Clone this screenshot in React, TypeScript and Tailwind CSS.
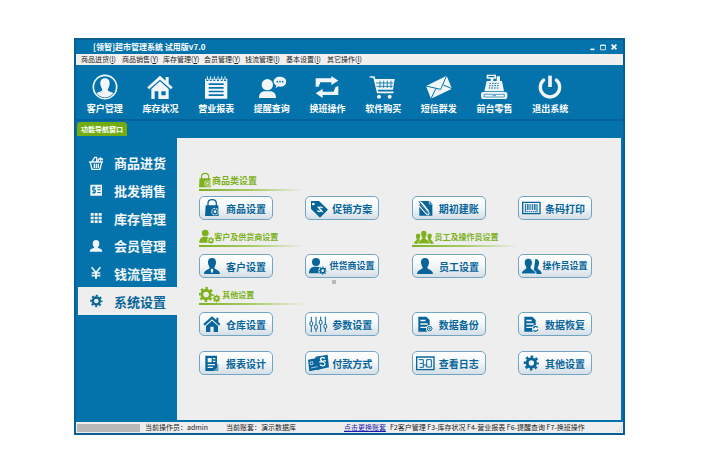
import type { ReactNode } from "react";

type GearProps = { cx: number; cy: number; r: number; ring: number; color?: string };

function Gear({ cx, cy, r, ring, color = "currentColor" }: GearProps) {
  return (
    <g fill="none" stroke={color}>
      <circle cx={cx} cy={cy} r={r - ring / 2} strokeWidth={ring} />
      <circle cx={cx} cy={cy} r={r + ring / 4} strokeWidth={ring * 0.8} pathLength={16} strokeDasharray="1 1" strokeDashoffset={0.5} />
    </g>
  );
}

/* ---------- toolbar icons ---------- */

const BLUE = "#0573ab";
const toolbar: { label: string; icon: ReactNode }[] = [
  {
    label: "客户管理",
    icon: (
      <>
        <circle cx="42" cy="39" r="35" fill="none" stroke="#f2f6f8" strokeWidth="5" />
        <path d="M42 13c10 0 15 7 14 17-1 9-5 12-6 18 1 5 12 5 17 10-6 8-15 12-25 12s-19-4-25-12c5-5 16-5 17-10-1-6-5-9-6-18-1-10 4-17 14-17z" />
      </>
    ),
  },
  {
    label: "库存状况",
    icon: (
      <>
        <path d="M42 5 59 20V9h9v20l12 11-5 6-33-29L9 46l-5-6z" />
        <path fillRule="evenodd" d="M42 22 68 45v30H16V45zM26 52v23h11V52zM46 52v12h13V52z" />
      </>
    ),
  },
  {
    label: "营业报表",
    icon: (
      <>
        <path fillRule="evenodd" d="M9 14h67v60H9zM20 28v5h45v-5zM20 39v5h45v-5zM20 50v5h45v-5zM20 61v5h45v-5z" />
        <path d="M16 8v13M26 8v13M37 8v13M48 8v13M59 8v13M69 8v13" stroke={BLUE} strokeWidth="6" fill="none" />
        <path d="M16 7v11M26 7v11M37 7v11M48 7v11M59 7v11M69 7v11" stroke="#f2f6f8" strokeWidth="3" fill="none" />
      </>
    ),
  },
  {
    label: "提醒查询",
    icon: (
      <>
        <circle cx="28" cy="32" r="17" />
        <path d="M3 72c0-14 8-20 17-20h17c9 0 17 6 17 20z" />
        <path d="M66 8c11 0 19 6 19 15s-8 15-19 15c-2 0-4 0-5-1l-8 6 2-9c-5-3-8-6-8-11 0-9 8-15 19-15z" />
        <g fill={BLUE}>
          <circle cx="58" cy="23" r="2.5" />
          <circle cx="66" cy="23" r="2.5" />
          <circle cx="74" cy="23" r="2.5" />
        </g>
      </>
    ),
  },
  {
    label: "换班操作",
    icon: (
      <>
        <path d="M8 38V13h47V6l21 14-21 13v-8H22l-5 13z" />
        <path d="M76 36v27H29v9L8 58l21-13v8h33l5-13z" />
      </>
    ),
  },
  {
    label: "软件购买",
    icon: (
      <>
        <path d="M4 9h11l11 46h46" fill="none" stroke="#f2f6f8" strokeWidth="5" strokeLinecap="round" />
        <path d="M16 15h61l-5 32H25z" />
        <path d="M21 27h52M23 37h48M33 20v22M44 20v22M55 20v22M66 20v22" stroke={BLUE} strokeWidth="2.5" fill="none" />
        <circle cx="30" cy="68" r="6" />
        <circle cx="62" cy="68" r="6" />
      </>
    ),
  },
  {
    label: "短信群发",
    icon: (
      <>
        <path d="M3 36 65 5l16 39-63 30z" />
        <path d="m3 36 44 10L65 5M18 74l15-31M81 44 55 33" fill="none" stroke={BLUE} strokeWidth="3" />
      </>
    ),
  },
  {
    label: "前台零售",
    icon: (
      <>
        <path fillRule="evenodd" d="M20 2h28v12h-8v7h10V7h10v14h6l6 31H13l7-31h12v-7H20zM25 6v4h18V6z" />
        <path d="M28 28h28M27 35h30M26 42h32" stroke={BLUE} strokeWidth="3" strokeDasharray="5 3" fill="none" />
        <rect x="3" y="54" width="79" height="21" rx="6" />
        <path d="M12 61h61v8H12zM38 65h10" stroke={BLUE} strokeWidth="2" fill="none" />
      </>
    ),
  },
  {
    label: "退出系统",
    icon: (
      <>
        <path d="M23 18a29 29 0 1 0 38 0" fill="none" stroke="#f2f6f8" strokeWidth="10" strokeLinecap="round" />
        <path d="M42 5v34" stroke="#f2f6f8" strokeWidth="11" />
      </>
    ),
  },
];

/* ---------- sidebar icons ---------- */

const sidebar: { label: string; icon: ReactNode }[] = [
  {
    label: "商品进货",
    icon: (
      <g fill="none" stroke="currentColor" strokeWidth="4">
        <path d="M3 21h42M7 22l5 21h24l5-21M12 20l8-13 6 0v13M30 20c0-10 10-14 14-4M19 26v13M25 26v13M31 26v13" />
        <path d="M33 12h11M38 7v11" strokeWidth="3" />
      </g>
    ),
  },
  {
    label: "批发销售",
    icon: (
      <>
        <path fillRule="evenodd" d="M7 8h35v33H7zM28 14v3h10v-3zM28 22v3h10v-3zM28 30v3h10v-3z" />
        <path d="M23 16h-9v8h8v8h-9M18 12v24" stroke={BLUE} strokeWidth="3" fill="none" />
      </>
    ),
  },
  {
    label: "库存管理",
    icon: <path d="M8 9h9v8H8zM20 9h9v8h-9zM32 9h9v8h-9zM8 20h9v8H8zM20 20h9v8h-9zM32 20h9v8h-9zM8 31h9v8H8zM20 31h9v8h-9zM32 31h9v8h-9z" />,
  },
  {
    label: "会员管理",
    icon: (
      <>
        <ellipse cx="24" cy="17" rx="10" ry="11" />
        <path d="M18 25h12v5c8 2 13 4 13 11H5c0-7 5-9 13-11z" />
      </>
    ),
  },
  {
    label: "钱流管理",
    icon: <path d="m11 7 13 16L37 7M11 24h26M11 32h26M24 23v19" fill="none" stroke="currentColor" strokeWidth="5" />,
  },
  { label: "系统设置", icon: <Gear cx={25} cy={24} r={14} ring={7} /> },
];

/* ---------- icons shared by settings buttons and headings ---------- */

const PANEL = "#f4f6f8";

const bag = (
  <>
    <path d="M21 25V16C21 1 46 1 46 16v9" fill="none" stroke="currentColor" strokeWidth="4" />
    <path d="M14 22h38l1 32H12z" />
    <circle cx="42" cy="41" r="11" fill={PANEL} />
    <Gear cx={42} cy={41} r={8} ring={4} />
  </>
);
const person = (
  <path d="M33 6c9 0 13 6 12 15-1 7-4 10-5 15 1 5 17 6 17 18H9c0-12 16-13 17-18-1-5-4-8-5-15-1-9 3-15 12-15z" />
);
const personGear = (
  <>
    <circle cx="27" cy="18" r="12" />
    <path d="M6 52c0-13 7-20 16-20h10c7 0 11 3 13 7v13z" />
    <circle cx="47" cy="44" r="13" fill={PANEL} />
    <Gear cx={47} cy={44} r={9} ring={5} />
  </>
);
const house = (
  <>
    <path d="M33 7 46 18V11h6v13l6 6-4 5-21-19-22 19-4-5z" />
    <path fillRule="evenodd" d="m33 20 18 16v18H15V36zM28 38v16h10V38z" />
  </>
);
const dbDoc = (
  <>
    <path fillRule="evenodd" d="M13 8h24l10 10v35H13zM19 17v5h16v-5zM19 28v4h22v-4zM19 38v4h20v-4z" />
    <circle cx="47" cy="44" r="11" fill={PANEL} />
  </>
);
const people = (
  <>
    <path d="M14 20c6 0 8 5 7 11-1 4-3 5-3 8 1 3 5 3 7 5v10H1c0-9 8-10 9-14-1-3-3-5-3-9-1-6 2-11 7-11zM52 20c6 0 8 5 7 11-1 4-3 5-3 9 1 3 9 5 9 14H41V44c2-2 6-2 7-5-1-3-3-4-3-8-1-6 2-11 7-11z" />
    <path d="M33 10c8 0 11 6 10 13-1 6-4 8-4 13 1 5 13 6 13 18H14c0-12 12-13 13-18 0-5-3-7-4-13-1-7 2-13 10-13z" stroke={PANEL} strokeWidth="2" />
  </>
);
const gears = (
  <>
    <Gear cx={27} cy={30} r={20} ring={10} />
    <Gear cx={64} cy={44} r={10} ring={6} />
  </>
);

type Item = { label: string; icon: ReactNode };

const goods: Item[] = [
  { label: "商品设置", icon: bag },
  {
    label: "促销方案",
    icon: (
      <>
        <path fillRule="evenodd" d="M12 9h24l27 26-24 24-27-26zM19 14a4 4 0 1 0 .1 0z" />
        <path d="M47 30c-8-6-13-1-8 4s0 9-8 4M32 26l15 16" fill="none" stroke={PANEL} strokeWidth="4" />
      </>
    ),
  },
  {
    label: "期初建账",
    icon: (
      <>
        <path d="M16 9h30l9 9v35H16z" />
        <path d="M46 9v9h9" fill="none" stroke={PANEL} strokeWidth="2" />
        <path d="m17 12 26 30c4 6-2 10-6 5L16 23c-6-8 2-15 8-7l19 23" fill="none" stroke={PANEL} strokeWidth="5" />
        <path d="m15 11 27 33c2 3-2 5-4 2L16 20" fill="none" stroke="currentColor" strokeWidth="3" />
      </>
    ),
  },
  {
    label: "条码打印",
    icon: (
      <g fill="none" stroke="currentColor">
        <path d="M8 13h52v34H8z" strokeWidth="4" />
        <path d="M16 18v25M22 18v18M27 18v18M37 18v18M43 18v18M51 18v25" strokeWidth="3" />
        <path d="M32 18v18M47 18v18" strokeWidth="2" />
        <path d="M20 41h28" strokeWidth="3" strokeDasharray="4 2" />
      </g>
    ),
  },
];

const clients: Item[] = [
  {
    label: "客户设置",
    icon: (
      <>
        {person}
        <path d="m33 37 4 5-2 8h-4l-2-8z" fill={PANEL} />
      </>
    ),
  },
  { label: "供货商设置", icon: personGear },
];

const staff: Item[] = [
  { label: "员工设置", icon: person },
  {
    label: "操作员设置",
    icon: (
      <>
        <path d="M46 9c9 0 12 7 11 15-1 6-4 8-4 13 1 5 12 6 12 17H40z" />
        <path d="M25 7c9 0 13 7 12 15-1 7-4 9-4 14 1 5 15 6 15 18H4c0-12 13-13 14-18-1-5-4-7-5-14-1-8 3-15 12-15z" stroke={PANEL} strokeWidth="3" />
      </>
    ),
  },
];

const others: Item[] = [
  { label: "仓库设置", icon: house },
  {
    label: "参数设置",
    icon: (
      <g fill="none" stroke="currentColor" strokeWidth="3">
        <path d="M13 8v46M27 8v46M41 8v46M55 8v46" />
        <g fill={PANEL}>
          <rect x="9" y="23" width="8" height="12" rx="3" />
          <rect x="23" y="33" width="8" height="12" rx="3" />
          <rect x="37" y="19" width="8" height="12" rx="3" />
          <rect x="51" y="31" width="8" height="12" rx="3" />
        </g>
      </g>
    ),
  },
  {
    label: "数据备份",
    icon: (
      <>
        {dbDoc}
        <circle cx="47" cy="44" r="7" fill="none" stroke="currentColor" strokeWidth="3" />
        <path d="M43 44h8M47 40v8" stroke="currentColor" strokeWidth="2" />
      </>
    ),
  },
  {
    label: "数据恢复",
    icon: (
      <>
        {dbDoc}
        <path d="M40 43a7 7 0 0 1 13-2M54 46a7 7 0 0 1-13 2" fill="none" stroke="currentColor" strokeWidth="4" />
      </>
    ),
  },
  {
    label: "报表设计",
    icon: (
      <>
        <path fillRule="evenodd" d="M13 8h35v36L38 54H13zM20 15v13h12V15zM36 15v4h7v-4zM36 23v4h7v-4zM20 33v4h22v-4zM20 41v4h16v-4z" />
        <path d="M48 34v10L38 54h14V34z" opacity=".6" />
      </>
    ),
  },
  {
    label: "付款方式",
    icon: (
      <>
        <path d="m3 20 30-6 5 35-31 6z" />
        <path d="m25 11 37-6 4 38-36 8z" />
        <path d="m9 27 8-1 1 8-8 1zM12 45l20-4" fill="none" stroke={PANEL} strokeWidth="2" />
        <path d="M54 16c-10-6-16 0-12 6s14 5 12 12-12 5-15 0M37 27l20-4" fill="none" stroke={PANEL} strokeWidth="4" />
      </>
    ),
  },
  {
    label: "查看日志",
    icon: (
      <g fill="none" stroke="currentColor" strokeWidth="4">
        <path d="M8 12h52v38H8z" />
        <path d="M14 20h14v11H17M28 31v12H17" strokeWidth="3" />
        <path d="M38 20h14v22H38zM28 36h10" strokeWidth="3" />
      </g>
    ),
  },
  { label: "其他设置", icon: <Gear cx={34} cy={30} r={17} ring={9} /> },
];

function SettingButton({ label, icon }: Item) {
  return (
    <button
      type="button"
      className="flex h-6 w-[74px] items-center rounded-[5px] border border-[#72a5c3] bg-linear-to-b from-white via-[#f3f6f8] to-[#d5dfe6] px-px text-[#07659a]"
    >
      <svg viewBox="0 0 66 60" className="h-5 w-[22px] shrink-0" fill="currentColor" aria-hidden="true">
        {icon}
      </svg>
      <span
        className={`w-[46px] shrink-0 text-center font-bold whitespace-nowrap ${
          label.length > 4 ? "text-[9px]" : "text-[10px]"
        }`}
      >
        {label}
      </span>
    </button>
  );
}

function Heading({ label, icon, viewBox }: Item & { viewBox: string }) {
  return (
    <div className="w-[106px] text-[#7db21c]">
      <h2
        className={`flex h-[17px] items-center leading-none font-bold whitespace-nowrap ${
          label === "商品类设置" ? "text-[9px]" : "text-[8px]"
        }`}
      >
        <svg viewBox={viewBox} className="h-[17px] shrink-0" fill="currentColor" aria-hidden="true">
          {icon}
        </svg>
        {label}
      </h2>
      <div className="h-0.5 bg-linear-to-r from-[#7db21c] via-[#a9cb69] to-transparent" />
    </div>
  );
}

const menus: [string, string][] = [
  ["商品进货", "I"],
  ["商品销售", "Y"],
  ["库存管理", "Y"],
  ["会员管理", "Y"],
  ["钱流管理", "I"],
  ["基本设置", "I"],
  ["其它操作", "I"],
];

export default function App() {
  return (
    <div className="min-h-screen bg-white pt-[38px] pr-[84px] pb-[38px] pl-[74px] font-['Noto_Sans_CJK_SC',sans-serif]">
      <main className="border-2 border-[#075f94] bg-[#0573ab]">
        <header className="flex h-[14px] items-center justify-between pr-1 pl-[17px] text-white">
          <h1 className="text-[8px] leading-none font-bold">[领智]超市管理系统 试用版v7.0</h1>
          <div className="flex">
            <button type="button" aria-label="最小化" className="flex h-3 w-[11px] items-center justify-center">
              <svg viewBox="0 0 10 10" className="size-2" stroke="currentColor" strokeWidth="2" fill="none"><path d="M3 8h5" /></svg>
            </button>
            <button type="button" aria-label="最大化" className="flex h-3 w-[11px] items-center justify-center">
              <svg viewBox="0 0 10 10" className="size-2" stroke="currentColor" fill="none"><path d="M2 2.5h6v6H2zM2 3h6" /></svg>
            </button>
            <button type="button" aria-label="关闭" className="flex h-3 w-[11px] items-center justify-center">
              <svg viewBox="0 0 10 10" className="size-2" stroke="currentColor" strokeWidth="2" fill="none"><path d="m2 2 6 6M8 2 2 8" /></svg>
            </button>
          </div>
        </header>

        <nav aria-label="菜单" className="flex h-[11px] items-center bg-[#f0f0f0] pl-[5px] text-[7px] leading-none text-[#222]">
          {menus.map(([label, key]) => (
            <button key={label} type="button" className="w-[41px] text-left whitespace-nowrap">
              {label}(<u>{key}</u>)
            </button>
          ))}
        </nav>

        <div className="grid h-[56px] grid-cols-9 border-b-2 border-[#04629a] pt-[9px] pr-[45px] pl-px">
          {toolbar.map(({ label, icon }) => (
            <button key={label} type="button" className="flex flex-col items-center gap-1 text-white">
              <svg viewBox="0 0 84 78" className="h-[26px] w-[28px] shrink-0" fill="#f2f6f8" aria-hidden="true">
                {icon}
              </svg>
              <span className="text-[9px] leading-none font-bold whitespace-nowrap">{label}</span>
            </button>
          ))}
        </div>

        <div className="flex h-[17px] items-end px-px pb-0.5">
          <button type="button" className="flex h-[14px] w-[50px] items-center justify-center rounded-t-sm bg-[#73ac12] text-[7px] leading-none font-bold text-white">
            功能导航窗口
          </button>
        </div>

        <div className="flex pr-0.5 pl-0.5">
          <nav aria-label="功能导航" className="w-[99px] shrink-0 pt-[11px]">
            <div className="grid h-[166px] grid-rows-6">
              {sidebar.map(({ label, icon }) => {
                const active = label === "系统设置";
                return (
                  <button
                    key={label}
                    type="button"
                    className={`flex w-full items-center gap-[10px] pl-[10px] text-[13px] leading-none font-bold ${
                      active ? "bg-[#eeeeee] text-[#07659a]" : "text-[#f2f6f8]"
                    }`}
                  >
                    <svg viewBox="0 0 48 48" className="size-4 shrink-0" fill="currentColor" aria-hidden="true">
                      {icon}
                    </svg>
                    {label}
                  </button>
                );
              })}
            </div>
          </nav>

          <section className="grow bg-[#eeeeee] pt-[34px] pr-[29px] pb-[45px] pl-[22px]">
            <Heading label="商品类设置" icon={bag} viewBox="12 0 46 60" />
            <div className="mt-[5px] flex justify-between">
              {goods.map((item) => <SettingButton key={item.label} {...item} />)}
            </div>

            <div className="mt-2 flex justify-between">
              <div>
                <Heading label="客户及供货商设置" icon={personGear} viewBox="5 0 54 60" />
                <div className="mt-[7px] flex w-[180px] justify-between">
                  {clients.map((item) => <SettingButton key={item.label} {...item} />)}
                </div>
                <div className="mt-0.5 ml-[133px] size-1 bg-[#b9b9b9]" />
              </div>
              <div>
                <Heading label="员工及操作员设置" icon={people} viewBox="-6 2 74 56" />
                <div className="mt-[7px] flex w-[180px] justify-between">
                  {staff.map((item) => <SettingButton key={item.label} {...item} />)}
                </div>
              </div>
            </div>

            <div className="mt-0.5">
              <Heading label="其他设置" icon={gears} viewBox="2 0 82 60" />
            </div>
            <div className="mt-[7px] grid grid-cols-[repeat(4,74px)] justify-between gap-y-[15px]">
              {others.map((item) => <SettingButton key={item.label} {...item} />)}
            </div>
          </section>
        </div>

        <footer className="mt-0.5 flex h-[11px] items-center bg-[#eeeeee] text-[7px] leading-none whitespace-nowrap text-[#222]">
          <span className="ml-px h-2 w-[63px] bg-[#b8b8b8]" />
          <span className="ml-[5px] w-[81px]">当前操作员：admin</span>
          <span className="w-[118px]">当前账套：演示数据库</span>
          <a href="#account" className="text-[#1a1ab0] underline">点击更换账套</a>
          <span className="ml-1">F2客户管理 F3-库存状况 F4-营业报表 F6-提醒查询 F7-换班操作</span>
          <svg viewBox="0 0 10 10" className="ml-auto size-2 self-end" fill="#aaa" aria-hidden="true">
            <path d="M8 1h1v1H8zM8 4h1v1H8zM8 7h1v1H8zM5 4h1v1H5zM5 7h1v1H5zM2 7h1v1H2z" />
          </svg>
        </footer>
      </main>
    </div>
  );
}
